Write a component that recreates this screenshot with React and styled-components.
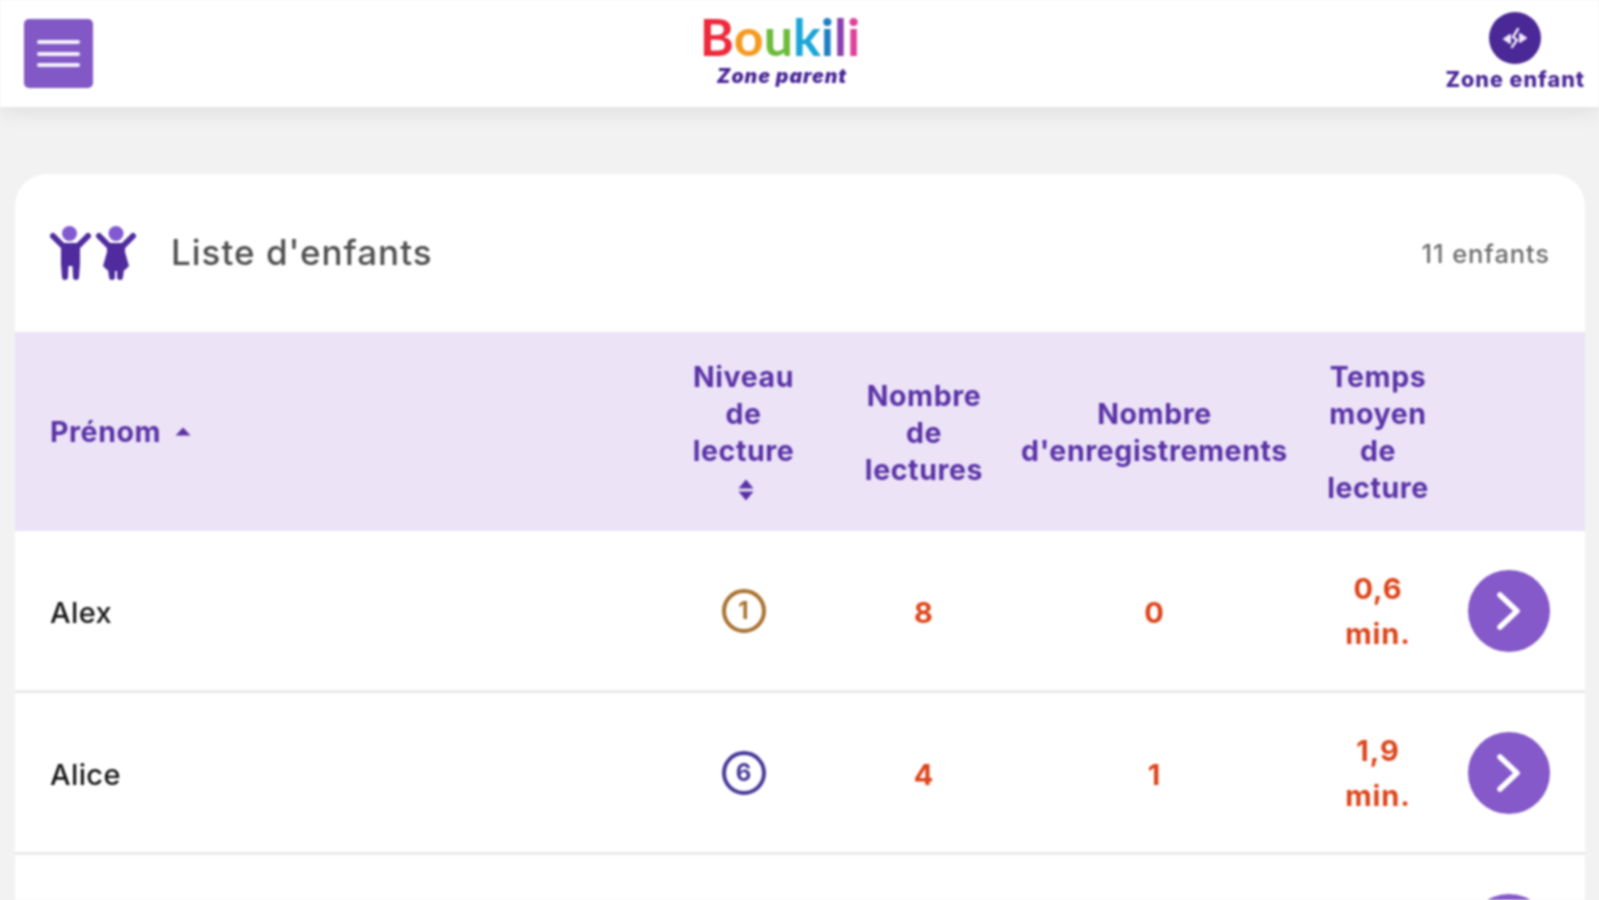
import styled, { createGlobalStyle } from "styled-components";

const GlobalStyle = createGlobalStyle`
  html, body {
    margin: 0;
    height: 900px;
    overflow: hidden;
    background: #f2f2f2;
    font-family: "Inter", "Liberation Sans", sans-serif;
  }
`;

const Page = styled.div`
  height: 900px;
  overflow: hidden;
  filter: blur(0.9px);
`;

const TopBar = styled.header`
  display: grid;
  grid-template-columns: 1fr auto 1fr;
  align-items: start;
  height: 107px;
  padding: 0 14px 0 24px;
  background: #fff;
  box-shadow: 0 4px 22px rgba(0, 0, 0, 0.09);
  position: relative;
`;

const MenuButton = styled.button`
  display: flex;
  flex-direction: column;
  justify-content: center;
  gap: 7.5px;
  width: 69px;
  height: 69px;
  margin-top: 19px;
  padding: 0 13px;
  border: none;
  border-radius: 5px;
  background: #8158c6;
`;

const MenuBar = styled.span`
  display: block;
  height: 4px;
  border-radius: 2px;
  background: #f6f0fc;
`;

const Logo = styled.div`
  display: flex;
  flex-direction: column;
  align-items: center;
  padding-top: 7px;
  margin-right: 49px;
`;

const LogoName = styled.div`
  font-family: "Lato", sans-serif;
  font-size: 52px;
  font-weight: 700;
  line-height: 58px;
`;

const LogoLetter = styled.span`
  color: ${(props) => props.color};
`;

const LogoSub = styled.div`
  margin: -1px 0 0 4px;
  font-size: 19.5px;
  font-weight: 900;
  font-style: italic;
  line-height: 24px;
  letter-spacing: 1px;
  color: #4a2696;
`;

const ChildZone = styled.div`
  justify-self: end;
  display: flex;
  flex-direction: column;
  align-items: center;
  padding-top: 12px;
`;

const ChildZoneIcon = styled.div`
  display: flex;
  align-items: center;
  justify-content: center;
  width: 52px;
  height: 52px;
  border-radius: 50%;
  background: #4a2896;
`;

const ChildZoneLabel = styled.div`
  margin-top: 2px;
  font-size: 21.5px;
  font-weight: 800;
  line-height: 27px;
  letter-spacing: 1px;
  color: #4a2696;
`;

const Card = styled.main`
  margin: 67px 14px 0 15px;
  border-radius: 32px 32px 0 0;
  background: #fff;
`;

const CardHeader = styled.div`
  display: flex;
  align-items: center;
  justify-content: space-between;
  height: 158px;
  padding: 0 35px;
`;

const CardTitle = styled.div`
  display: flex;
  align-items: center;
  gap: 34px;
`;

const TitleText = styled.h1`
  margin: -3px 0 0;
  font-size: 35px;
  font-weight: 500;
  letter-spacing: 1px;
  color: #4f4f4f;
`;

const ChildCount = styled.div`
  font-size: 25.5px;
  font-weight: 500;
  letter-spacing: 0.9px;
  color: #6e6e6e;
`;

const columns = "1fr 205px 156px 305px 142px 136px";

const HeadRow = styled.div`
  display: grid;
  grid-template-columns: ${columns};
  align-items: center;
  height: 199px;
  background: #ece3f7;
  font-size: 28.5px;
  font-weight: 700;
  line-height: 37px;
  letter-spacing: 0.6px;
  color: #5a32a6;
`;

const NameHead = styled.div`
  display: flex;
  align-items: center;
  gap: 14px;
  padding-left: 35px;
`;

const HeadCell = styled.div`
  display: flex;
  flex-direction: column;
  align-items: center;
  text-align: center;
  padding-top: ${(props) => props.$top || 0}px;
  padding-bottom: ${(props) => props.$bottom || 0}px;
`;

const HeadLabel = styled.span`
  width: min-content;
`;

const SortIcon = styled.svg`
  display: block;
  margin-top: ${(props) => props.$gap || 0}px;
  margin-left: ${(props) => props.$shift || 0}px;
`;

const Row = styled.div`
  display: grid;
  grid-template-columns: ${columns};
  align-items: center;
  height: 159px;
  border-bottom: 3px solid #e9e9e9;
`;

const Name = styled.div`
  padding: 4px 0 0 35px;
  font-size: 29px;
  font-weight: 500;
  letter-spacing: 0.4px;
  color: #161616;
`;

const LevelCell = styled.div`
  display: flex;
  justify-content: center;
`;

const Level = styled.div`
  display: flex;
  align-items: center;
  justify-content: center;
  box-sizing: border-box;
  width: 44px;
  height: 44px;
  border: 4px solid ${(props) => props.color};
  border-radius: 50%;
  font-size: 24px;
  font-weight: 700;
  color: ${(props) => props.color};
`;

const Value = styled.div`
  padding-top: ${(props) => (props.$stacked ? 0 : 3)}px;
  font-size: 29px;
  font-weight: 700;
  line-height: 45px;
  letter-spacing: 0.9px;
  text-align: center;
  color: #dc4419;
`;

const ValueText = styled.span`
  display: inline-block;
  width: min-content;
`;

const ActionCell = styled.div`
  display: flex;
  justify-content: flex-end;
  padding-right: 35px;
`;

const GoButton = styled.button`
  display: flex;
  align-items: center;
  justify-content: center;
  width: 82px;
  height: 82px;
  padding: 0;
  border: none;
  border-radius: 50%;
  background: #8559c9;
`;

function KidsIcon() {
  return (
    <svg width="87" height="55" viewBox="0 0 87 55" fill="#4f2b9e" aria-hidden="true">
      <circle cx="19.5" cy="7.5" r="7.5" fill="#8259d2" />
      <circle cx="66" cy="7.5" r="7.5" fill="#8259d2" />
      <path d="M3 10 13 20H28L38 10" fill="none" stroke="#4f2b9e" strokeWidth="6" strokeLinecap="round" strokeLinejoin="round" />
      <path d="M11 18H30V38L29 51a3 3 0 0 1-6 0L22.5 40h-4L18 51a3 3 0 0 1-6 0L11 38Z" />
      <path d="M49 10 59 20H73L83 10" fill="none" stroke="#4f2b9e" strokeWidth="6" strokeLinecap="round" strokeLinejoin="round" />
      <path d="M57 18H75V26L79 40 75 44H74L73 51a3 3 0 0 1-6 0V45H65V51a3 3 0 0 1-6 0L58 44H57L53 40 57 26Z" />
    </svg>
  );
}

const children = [
  { name: "Alex", level: 1, levelColor: "#a8722f", reads: 8, records: 0, time: "0,6 min." },
  { name: "Alice", level: 6, levelColor: "#473a9a", reads: 4, records: 1, time: "1,9 min." },
];

const logoLetters = [
  ["B", "#ee2a3c"],
  ["o", "#f59a1f"],
  ["u", "#6cbb3c"],
  ["k", "#1aa6d8"],
  ["i", "#1f7fc4"],
  ["l", "#8a3fb0"],
  ["i", "#e0409a"],
];

function Chevron() {
  return (
    <svg width="26" height="40" viewBox="0 0 26 40" fill="none" stroke="#fff" strokeWidth="5.5" strokeLinecap="round" strokeLinejoin="round" aria-hidden="true">
      <path d="M4 4 21 20 4 36" />
    </svg>
  );
}

export default function App() {
  return (
    <Page>
      <GlobalStyle />
      <TopBar>
        <MenuButton type="button" aria-label="Menu">
          <MenuBar />
          <MenuBar />
          <MenuBar />
        </MenuButton>
        <Logo>
          <LogoName>
            {logoLetters.map(([letter, color], i) => (
              <LogoLetter key={i} color={color}>{letter}</LogoLetter>
            ))}
          </LogoName>
          <LogoSub>Zone parent</LogoSub>
        </Logo>
        <ChildZone>
          <ChildZoneIcon>
            <svg width="30" height="30" viewBox="0 0 30 30" fill="#efe8f8" stroke="#efe8f8" strokeWidth="2" strokeLinecap="round" strokeLinejoin="round" aria-hidden="true">
              <path d="M4 16 10 12V20Z" />
              <path d="M26 15 20 11V19Z" />
              <path d="M18 6 13 14 17 17 12 24" fill="none" strokeWidth="2.5" />
            </svg>
          </ChildZoneIcon>
          <ChildZoneLabel>Zone enfant</ChildZoneLabel>
        </ChildZone>
      </TopBar>
      <Card>
        <CardHeader>
          <CardTitle>
            <KidsIcon />
            <TitleText>Liste d'enfants</TitleText>
          </CardTitle>
          <ChildCount>11 enfants</ChildCount>
        </CardHeader>
        <HeadRow>
          <NameHead>
            Prénom
            <SortIcon width="16" height="9" viewBox="0 0 16 9" fill="#5a32a6" aria-hidden="true">
              <path d="M8 0.5 15.5 8.5H0.5Z" />
            </SortIcon>
          </NameHead>
          <HeadCell $bottom={4}>
            <HeadLabel>Niveau de lecture</HeadLabel>
            <SortIcon $gap={10} $shift={5} width="16" height="22" viewBox="0 0 16 22" fill="#5a32a6" aria-hidden="true">
              <path d="M8 0.5 15.5 9.5H0.5Z" />
              <path d="M8 21.5 15.5 12.5H0.5Z" />
            </SortIcon>
          </HeadCell>
          <HeadCell $top={2}>
            <HeadLabel>Nombre de lectures</HeadLabel>
          </HeadCell>
          <HeadCell>
            <HeadLabel>Nombre d'enregistrements</HeadLabel>
          </HeadCell>
          <HeadCell>
            <HeadLabel>Temps moyen de lecture</HeadLabel>
          </HeadCell>
          <div />
        </HeadRow>
        {children.map((child) => (
          <Row key={child.name}>
            <Name>{child.name}</Name>
            <LevelCell>
              <Level color={child.levelColor}>{child.level}</Level>
            </LevelCell>
            <Value>{child.reads}</Value>
            <Value>{child.records}</Value>
            <Value $stacked>
              <ValueText>{child.time}</ValueText>
            </Value>
            <ActionCell>
              <GoButton type="button" aria-label={`Voir ${child.name}`}>
                <Chevron />
              </GoButton>
            </ActionCell>
          </Row>
        ))}
        <Row>
          <div />
          <div />
          <div />
          <div />
          <div />
          <ActionCell>
            <GoButton type="button" aria-label="Voir">
              <Chevron />
            </GoButton>
          </ActionCell>
        </Row>
      </Card>
    </Page>
  );
}
